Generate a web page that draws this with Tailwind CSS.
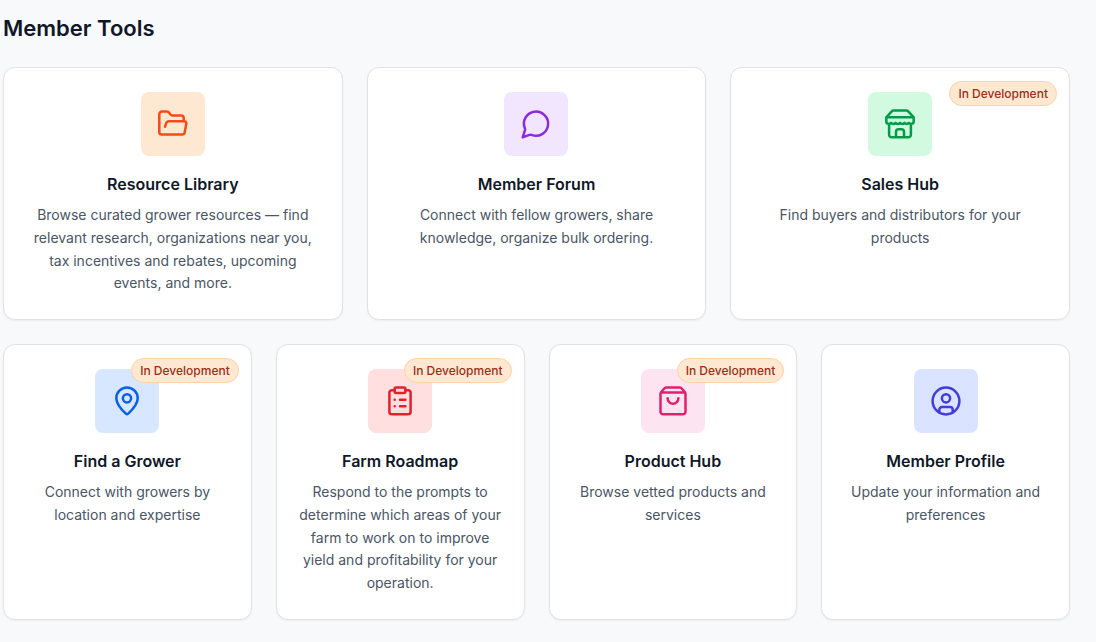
<!DOCTYPE html>
<html lang="en">
<head>
<meta charset="utf-8">
<meta name="viewport" content="width=device-width, initial-scale=1">
<title>Member Tools</title>
<script src="https://cdn.jsdelivr.net/npm/@tailwindcss/browser@4"></script>
</head>
<body class="min-h-screen bg-[#f8f9fb] font-[Inter,'Liberation_Sans',sans-serif] text-[#101828]">
<main class="pt-3 pr-[26px] pb-6 pl-[3px]">
  <h2 class="mb-[23px] text-[22px] leading-8 font-semibold">Member Tools</h2>

  <div class="mb-6 grid grid-cols-3 gap-6">
    <a href="#resources" class="relative rounded-xl border border-[#e3e1e2] bg-white px-5 py-6 text-center shadow-xs">
      <div class="mx-auto mb-4 flex size-16 items-center justify-center rounded-lg bg-[#ffe8d1] text-[#f54a1a]">
        <svg class="size-8" viewBox="0 0 32 32" fill="none" stroke="currentColor" stroke-width="2.5" stroke-linecap="round" stroke-linejoin="round" aria-hidden="true"><path d="M8 18.7 9.1 15.4a3.2 3.2 0 0 1 3.1-2.2h15.1a2 2 0 0 1 2 2.4l-1.6 8.8a2.6 2.6 0 0 1-2.6 2.2H4.9a2.6 2.6 0 0 1-2.6-2.6V6.2a2.6 2.6 0 0 1 2.6-2.6h5c.9 0 1.7.4 2.2 1.1l1.2 1.7c.5.7 1.3 1.1 2.2 1.1h8.6a2.6 2.6 0 0 1 2.6 2.6v3"/></svg>
      </div>
      <h3 class="mb-2 text-base font-semibold">Resource Library</h3>
      <p class="text-sm leading-relaxed text-[#4a5565]">Browse curated grower resources — find relevant research, organizations near you, tax incentives and rebates, upcoming events, and more.</p>
    </a>
    <a href="#forum" class="relative rounded-xl border border-[#e3e1e2] bg-white px-5 py-6 text-center shadow-xs">
      <div class="mx-auto mb-4 flex size-16 items-center justify-center rounded-lg bg-[#f2e6ff] text-[#8a2be0]">
        <svg class="size-8" viewBox="0 0 32 32" fill="none" stroke="currentColor" stroke-width="2.5" stroke-linecap="round" stroke-linejoin="round" aria-hidden="true"><path d="M4.9 20.4a12.1 12.1 0 1 1 6.6 6.5c-.6-.2-1.3-.2-2 0L2.7 29.3l2.3-7.1c.2-.6.2-1.2-.1-1.8Z"/></svg>
      </div>
      <h3 class="mb-2 text-base font-semibold">Member Forum</h3>
      <p class="px-6 text-sm leading-relaxed text-[#4a5565]">Connect with fellow growers, share knowledge, organize bulk ordering.</p>
    </a>
    <a href="#sales" class="relative rounded-xl border border-[#e3e1e2] bg-white px-5 py-6 text-center shadow-xs">
      <span class="absolute top-[13px] right-3 rounded-full border border-[#ffd2a3] bg-[#ffe8d1] px-2 py-1 text-xs leading-[15px] font-medium text-[#9c2f18]">In Development</span>
      <div class="mx-auto mb-4 flex size-16 items-center justify-center rounded-lg bg-[#d1fae1] text-[#059a48]">
        <svg class="size-8" viewBox="0 0 32 32" fill="none" stroke="currentColor" stroke-width="2.5" stroke-linecap="round" stroke-linejoin="round" aria-hidden="true"><path d="M2.3 9.3 7.5 3.6a3 3 0 0 1 2.2-1h12.6a3 3 0 0 1 2.2 1l5.2 5.7M2.3 9.3h27.4v4a2.6 2.6 0 0 1-2.6 2.6c-.9 0-1.7-.4-2.2-1-1.3 1.3-3.1 1.3-4.4 0-1.3 1.3-3.1 1.3-4.5 0-1.3 1.3-3.1 1.3-4.4 0-1.3 1.3-3.1 1.3-4.5 0-.5.6-1.3 1-2.2 1a2.6 2.6 0 0 1-2.6-2.6ZM5.1 16v10.7a2.6 2.6 0 0 0 2.6 2.6h16.6a2.6 2.6 0 0 0 2.6-2.6V16M12 29v-5.2a2.6 2.6 0 0 1 2.6-2.6h2.8a2.6 2.6 0 0 1 2.6 2.6V29"/></svg>
      </div>
      <h3 class="mb-2 text-base font-semibold">Sales Hub</h3>
      <p class="px-6 text-sm leading-relaxed text-[#4a5565]">Find buyers and distributors for your products</p>
    </a>
  </div>

  <div class="grid grid-cols-4 gap-6">
    <a href="#growers" class="relative rounded-xl border border-[#e3e1e2] bg-white px-5 py-6 text-center shadow-xs">
      <span class="absolute top-[13px] right-3 rounded-full border border-[#ffd2a3] bg-[#ffe8d1] px-2 py-1 text-xs leading-[15px] font-medium text-[#9c2f18]">In Development</span>
      <div class="mx-auto mb-4 flex size-16 items-center justify-center rounded-lg bg-[#d6e7ff] text-[#0a5fe8]">
        <svg class="size-8" viewBox="0 0 32 32" fill="none" stroke="currentColor" stroke-width="2.5" stroke-linecap="round" stroke-linejoin="round" aria-hidden="true"><path d="M26.7 13.2c0 6.6-7.3 13.4-9.8 15.7a1.4 1.4 0 0 1-1.8 0c-2.5-2.3-9.8-9.1-9.8-15.7a10.7 10.7 0 0 1 21.4 0Z"/><circle cx="16" cy="13.3" r="4.1"/></svg>
      </div>
      <h3 class="mb-2 text-base font-semibold">Find a Grower</h3>
      <p class="text-sm leading-relaxed text-[#4a5565]">Connect with growers by location and expertise</p>
    </a>
    <a href="#roadmap" class="relative rounded-xl border border-[#e3e1e2] bg-white px-5 py-6 text-center shadow-xs">
      <span class="absolute top-[13px] right-3 rounded-full border border-[#ffd2a3] bg-[#ffe8d1] px-2 py-1 text-xs leading-[15px] font-medium text-[#9c2f18]">In Development</span>
      <div class="mx-auto mb-4 flex size-16 items-center justify-center rounded-lg bg-[#ffdfdf] text-[#e5202a]">
        <svg class="size-8" viewBox="0 0 32 32" fill="none" stroke="currentColor" stroke-width="2.5" stroke-linecap="round" stroke-linejoin="round" aria-hidden="true"><rect x="10.6" y="2.5" width="10.8" height="5.4" rx="1.4"/><path d="M21.4 5.2H24a2.6 2.6 0 0 1 2.6 2.6v18.9a2.6 2.6 0 0 1-2.6 2.6H8a2.6 2.6 0 0 1-2.6-2.6V7.8A2.6 2.6 0 0 1 8 5.2h2.6M16 14.7h5.4M16 21.3h5.4M10.7 14.7h.02M10.7 21.3h.02"/></svg>
      </div>
      <h3 class="mb-2 text-base font-semibold">Farm Roadmap</h3>
      <p class="text-sm leading-relaxed text-[#4a5565]">Respond to the prompts to determine which areas of your farm to work on to improve yield and profitability for your operation.</p>
    </a>
    <a href="#products" class="relative rounded-xl border border-[#e3e1e2] bg-white px-5 py-6 text-center shadow-xs">
      <span class="absolute top-[13px] right-3 rounded-full border border-[#ffd2a3] bg-[#ffe8d1] px-2 py-1 text-xs leading-[15px] font-medium text-[#9c2f18]">In Development</span>
      <div class="mx-auto mb-4 flex size-16 items-center justify-center rounded-lg bg-[#fde4f1] text-[#e0206f]">
        <svg class="size-8" viewBox="0 0 32 32" fill="none" stroke="currentColor" stroke-width="2.5" stroke-linecap="round" stroke-linejoin="round" aria-hidden="true"><path d="M4.2 7 7.2 3.5a2.6 2.6 0 0 1 2-1h13.6a2.6 2.6 0 0 1 2 1l3 3.5c.4.5.7 1.1.7 1.8v17.9a2.6 2.6 0 0 1-2.6 2.6H6.1a2.6 2.6 0 0 1-2.6-2.6V8.8c0-.7.3-1.3.7-1.8ZM4.1 7.6h23.8M10.6 13.3a5.4 5.4 0 0 0 10.8 0"/></svg>
      </div>
      <h3 class="mb-2 text-base font-semibold">Product Hub</h3>
      <p class="text-sm leading-relaxed text-[#4a5565]">Browse vetted products and services</p>
    </a>
    <a href="#profile" class="relative rounded-xl border border-[#e3e1e2] bg-white px-5 py-6 text-center shadow-xs">
      <div class="mx-auto mb-4 flex size-16 items-center justify-center rounded-lg bg-[#dae3ff] text-[#443bdb]">
        <svg class="size-8" viewBox="0 0 32 32" fill="none" stroke="currentColor" stroke-width="2.5" stroke-linecap="round" stroke-linejoin="round" aria-hidden="true"><circle cx="16" cy="16" r="13.4"/><circle cx="16" cy="13.3" r="4.1"/><path d="M9.3 27.2v-2.4a2.7 2.7 0 0 1 2.7-2.7h8a2.7 2.7 0 0 1 2.7 2.7v2.4"/></svg>
      </div>
      <h3 class="mb-2 text-base font-semibold">Member Profile</h3>
      <p class="text-sm leading-relaxed text-[#4a5565]">Update your information and preferences</p>
    </a>
  </div>
</main>
</body>
</html>
